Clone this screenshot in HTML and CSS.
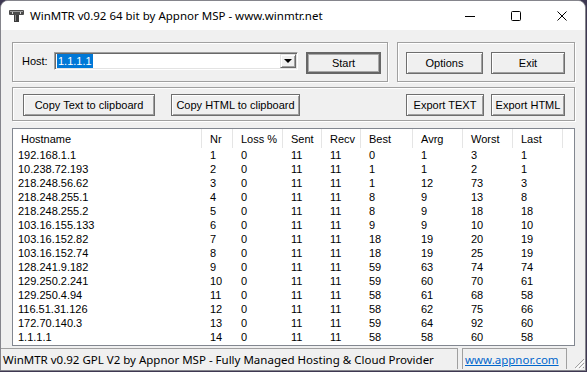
FILE: index.html
```html
<!DOCTYPE html>
<html lang="en">
<head>
    <meta charset="UTF-8">
    <title>WinMTR v0.92 64 bit by Appnor MSP - www.winmtr.net</title>
    <link rel="stylesheet" href="styles.css">
</head>
<body>
    <div class="window">
        <div class="titlebar">
            <svg class="app-icon" viewBox="0 0 15 12">
                <rect x="0" y="0" width="15" height="5" rx="1" fill="#4a4a4a"/>
                <rect x="1" y="1" width="13" height="1" fill="#9a9a9a"/>
                <rect x="3" y="2" width="1" height="2" fill="#cfcfcf"/>
                <rect x="11" y="2" width="1" height="2" fill="#cfcfcf"/>
                <rect x="5" y="5" width="5" height="7" fill="#3c3c3c"/>
                <rect x="6" y="5" width="1" height="6" fill="#8a8a8a"/>
            </svg>
            <span class="title">WinMTR v0.92 64 bit by Appnor MSP - www.winmtr.net</span>
            <div class="caption">
                <span class="cap-btn">
                    <svg width="10" height="10" viewBox="0 0 10 10"><path d="M0 5.5h10" stroke="#000" stroke-width="1"/></svg>
                </span>
                <span class="cap-btn">
                    <svg width="10" height="10" viewBox="0 0 10 10"><rect x="0.5" y="0.5" width="9" height="9" rx="1" fill="none" stroke="#000"/></svg>
                </span>
                <span class="cap-btn">
                    <svg width="10" height="10" viewBox="0 0 10 10"><path d="M0.5 0.5l9 9M9.5 0.5l-9 9" stroke="#000" stroke-width="1"/></svg>
                </span>
            </div>
        </div>

        <div class="client">
            <div class="row-top">
                <div class="group host-group">
                    <label class="host-label" for="host">Host:</label>
                    <div class="combo" id="host">
                        <span class="combo-text"><span class="sel">1.1.1.1</span></span>
                        <span class="combo-drop"><span class="arrow"></span></span>
                    </div>
                    <button class="btn btn-default start">Start</button>
                </div>
                <div class="group ctl-group">
                    <button class="btn options">Options</button>
                    <button class="btn exit">Exit</button>
                </div>
            </div>

            <div class="group row-mid">
                <button class="btn copy-text">Copy Text to clipboard</button>
                <button class="btn copy-html">Copy HTML to clipboard</button>
                <button class="btn export-text">Export TEXT</button>
                <button class="btn export-html">Export HTML</button>
            </div>

            <div class="list">
                <div class="lv-head">
                    <span>Hostname</span><span>Nr</span><span>Loss %</span><span>Sent</span><span>Recv</span>
                    <span>Best</span><span>Avrg</span><span>Worst</span><span>Last</span><span class="filler"></span>
                </div>
                <div class="lv-body" id="rows"></div>
            </div>
        </div>

        <div class="statusbar">
            <div class="pane pane-main">WinMTR v0.92 GPL V2 by Appnor MSP - Fully Managed Hosting &amp; Cloud Provider</div>
            <div class="pane pane-link"><a href="#">www.appnor.com</a></div>
            <svg class="grip" viewBox="0 0 12 12">
                <path d="M11 2L2 11M11 6L6 11M11 10L10 11" stroke="#a0a0a0" stroke-width="1"/>
                <path d="M12 3L3 12M12 7L7 12" stroke="#fff" stroke-width="1"/>
            </svg>
        </div>
    </div>

    <script>
        // hostname, nr, loss, sent, recv, best, avrg, worst, last
        const hops = [
            ['192.168.1.1', 1, 0, 11, 11, 0, 1, 3, 1],
            ['10.238.72.193', 2, 0, 11, 11, 1, 1, 2, 1],
            ['218.248.56.62', 3, 0, 11, 11, 1, 12, 73, 3],
            ['218.248.255.1', 4, 0, 11, 11, 8, 9, 13, 8],
            ['218.248.255.2', 5, 0, 11, 11, 8, 9, 18, 18],
            ['103.16.155.133', 6, 0, 11, 11, 9, 9, 10, 10],
            ['103.16.152.82', 7, 0, 11, 11, 18, 19, 20, 19],
            ['103.16.152.74', 8, 0, 11, 11, 18, 19, 25, 19],
            ['128.241.9.182', 9, 0, 11, 11, 59, 63, 74, 74],
            ['129.250.2.241', 10, 0, 11, 11, 59, 60, 70, 61],
            ['129.250.4.94', 11, 0, 11, 11, 58, 61, 68, 58],
            ['116.51.31.126', 12, 0, 11, 11, 58, 62, 75, 66],
            ['172.70.140.3', 13, 0, 11, 11, 59, 64, 92, 60],
            ['1.1.1.1', 14, 0, 11, 11, 58, 58, 60, 58]
        ];

        const body = document.getElementById('rows');
        hops.forEach(function (hop) {
            const row = document.createElement('div');
            row.className = 'lv-row';
            hop.forEach(function (value) {
                const cell = document.createElement('span');
                cell.textContent = value;
                row.appendChild(cell);
            });
            row.appendChild(document.createElement('span'));
            body.appendChild(row);
        });
    </script>
</body>
</html>
```

FILE: styles.css
```css
body {
    margin: 0;
    background-color: #3e3852;
    font-family: "Liberation Sans", Arial, sans-serif;
    font-size: 11px;
    color: #000;
}

.window {
    width: 586px;
    height: 371px;
    box-sizing: border-box;
    border: 1px solid #85858c;
    border-radius: 8px 8px 0 0;
    background-color: #f0f0f0;
    display: flex;
    flex-direction: column;
    overflow: hidden;
}

/* Title bar */
.titlebar {
    height: 29px;
    flex-shrink: 0;
    background-color: #fff;
    display: flex;
    align-items: center;
}
.app-icon {
    width: 15px;
    height: 12px;
    margin-left: 8px;
}
.title {
    margin-left: 6px;
    font-family: "Noto Sans", sans-serif;
    font-size: 11.5px;
}
.caption {
    margin-left: auto;
    display: flex;
    height: 100%;
}
.cap-btn {
    width: 46px;
    display: flex;
    align-items: center;
    justify-content: center;
}

/* Client area */
.client {
    padding: 12px 10px 2px 11px;
}
.group {
    box-sizing: border-box;
    border: 1px solid #a0a0a0;
    box-shadow: inset 1px 1px 0 #fff, 1px 1px 0 #fff;
}
.row-top {
    display: flex;
    gap: 9px;
    height: 40px;
}
.host-group {
    width: 376px;
    display: flex;
    align-items: flex-start;
    padding: 9px 0 0 9px;
}
.host-label {
    width: 32px;
    margin-top: 3px;
    line-height: 13px;
}
.combo {
    width: 244px;
    height: 18px;
    box-sizing: border-box;
    border: 1px solid;
    border-color: #a0a0a0 #fff #fff #a0a0a0;
    box-shadow: inset 1px 1px 0 #696969, inset -1px -1px 0 #e3e3e3;
    background-color: #fff;
    display: flex;
}
.combo-text {
    flex: 1;
    padding: 1px 0 0 2px;
}
.sel {
    display: inline-block;
    background-color: #0078d7;
    color: #fff;
    line-height: 14px;
    padding: 0 1px;
}
.combo-drop {
    width: 16px;
    margin: 1px 1px 1px 0;
    box-sizing: border-box;
    background-color: #f0f0f0;
    border: 1px solid;
    border-color: #e3e3e3 #696969 #696969 #e3e3e3;
    box-shadow: inset 1px 1px 0 #fff, inset -1px -1px 0 #a0a0a0;
    display: flex;
    align-items: center;
    justify-content: center;
}
.arrow {
    width: 0;
    height: 0;
    border-left: 4px solid transparent;
    border-right: 4px solid transparent;
    border-top: 4px solid #000;
}

/* Buttons */
.btn {
    height: 22px;
    box-sizing: border-box;
    padding: 0;
    font: inherit;
    color: #000;
    background-color: #f0f0f0;
    border: 1px solid #6e6e6e;
    box-shadow: inset 1px 1px 0 #fff, inset -1px -1px 0 #a0a0a0;
}
.btn-default {
    border: 2px solid #666;
    box-shadow: inset 0 0 0 1px #a8a8a8;
}
.start {
    width: 75px;
    margin-left: 8px;
}
.ctl-group {
    width: 178px;
    display: flex;
    gap: 8px;
    padding: 9px 0 0 8px;
}
.options {
    width: 77px;
}
.exit {
    width: 74px;
}
.row-mid {
    margin-top: 5px;
    width: 563px;
    height: 34px;
    display: flex;
    padding: 6px 9px 0 10px;
}
.copy-text {
    width: 132px;
}
.copy-html {
    width: 129px;
    margin-left: 16px;
}
.export-text {
    width: 78px;
    margin-left: auto;
}
.export-html {
    width: 74px;
    margin-left: 7px;
}

/* Result list */
.list {
    margin-top: 7px;
    width: 563px;
    height: 218px;
    box-sizing: border-box;
    border: 1px solid #828790;
    background-color: #fff;
    overflow: hidden;
}
.lv-head,
.lv-row {
    display: grid;
    grid-template-columns: 189px 31px 50px 39px 39px 52px 50px 50px 50px 1fr;
}
.lv-head {
    height: 19px;
}
.lv-head span {
    box-sizing: border-box;
    padding: 1px 0 0 8px;
    line-height: 18px;
    border-right: 1px solid #e5e5e5;
}
.lv-head .filler {
    border-right: none;
}
.lv-row span {
    padding-left: 8px;
    height: 14px;
    line-height: 14px;
    white-space: nowrap;
}
.lv-row span:first-child {
    padding-left: 5px;
}

/* Status bar */
.statusbar {
    height: 21px;
    display: flex;
    font-family: "Noto Sans", sans-serif;
    font-size: 11.5px;
}
.pane {
    box-sizing: border-box;
    border-top: 1px solid #a0a0a0;
    border-right: 1px solid #a0a0a0;
    line-height: 22px;
    white-space: nowrap;
    overflow: hidden;
}
.pane-main {
    width: 457px;
    padding-left: 2px;
}
.pane-link {
    width: 105px;
    margin-left: 4px;
    border-left: 1px solid #a0a0a0;
    padding-left: 2px;
}
.pane-link a {
    color: #0066cc;
}
.grip {
    width: 12px;
    height: 12px;
    margin: auto 0 0 auto;
}
```
